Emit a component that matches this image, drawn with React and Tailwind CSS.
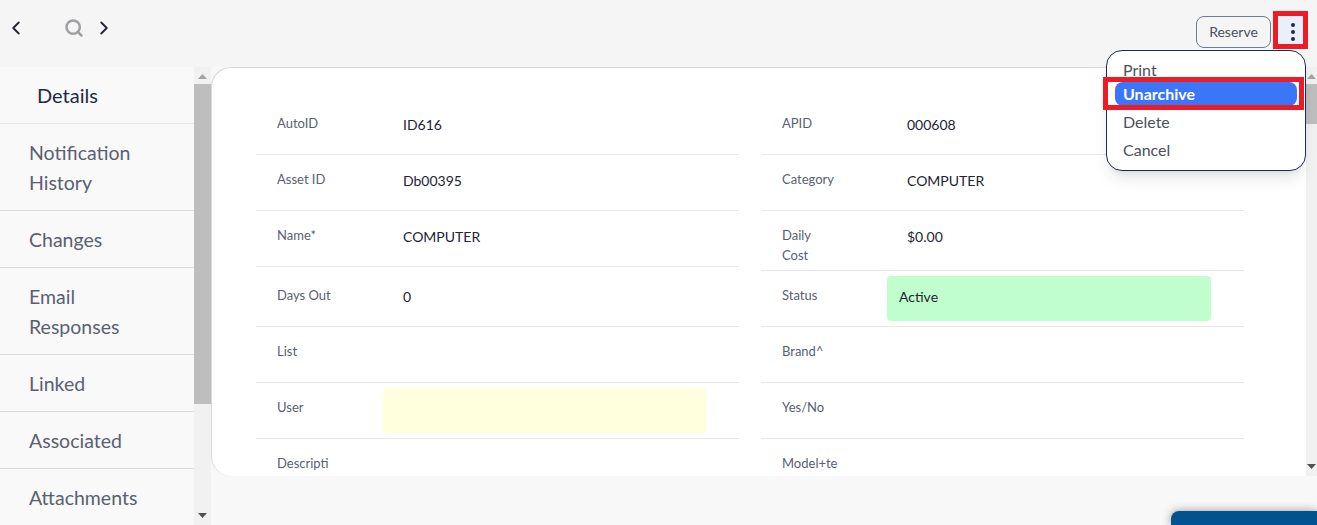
import { ChevronLeft, ChevronRight, Search } from "lucide-react";

const sideItems = [
  "Notification History",
  "Changes",
  "Email Responses",
  "Linked",
  "Associated",
  "Attachments",
];

const leftRows = [
  { label: "AutoID", value: "ID616" },
  { label: "Asset ID", value: "Db00395" },
  { label: "Name*", value: "COMPUTER" },
  { label: "Days Out", value: "0", low: true },
  { label: "List", value: "" },
  { label: "User", value: "", fill: "bg-[#ffffdd]" },
  { label: "Descripti", value: "" },
];

const rightRows = [
  { label: "APID", value: "000608" },
  { label: "Category", value: "COMPUTER" },
  { label: "Daily Cost", value: "$0.00", tall: true },
  { label: "Status", value: "Active", fill: "bg-[#c0ffcd]" },
  { label: "Brand^", value: "" },
  { label: "Yes/No", value: "" },
  { label: "Model+te", value: "" },
];

// Scrollbar arrow, pointing up or down
const Arrow = ({ down }) => (
  <svg width="9" height="5" viewBox="0 0 9 5" className="block">
    <path d={down ? "M0 0H9L4.5 5Z" : "M0 5H9L4.5 0Z"} fill={down ? "#505050" : "#a3a3a3"} />
  </svg>
);

const Scrollbar = ({ outer, thumb }) => (
  <div className={`flex flex-col items-center justify-between bg-[#f1f1f1] pt-[7px] pb-[7px] ${outer}`}>
    <Arrow />
    <div className={`mt-[5px] w-full bg-[#bebebe] ${thumb}`} />
    <div className="flex-1" />
    <Arrow down />
  </div>
);

const Row = ({ row, last, valueWidth, valuePad }) => (
  <div
    className={`flex ${row.tall || row.low ? "h-[60px]" : "h-[56px]"} ${last ? "" : "border-b border-[#e8e8e8]"}`}
  >
    <div
      className={`w-[126px] shrink-0 pl-[21px] text-[13px] leading-[20px] text-[#5a6072] ${row.low ? "pt-[18px]" : "pt-[14px]"}`}
    >
      {row.tall ? (
        <>
          Daily
          <br />
          Cost
        </>
      ) : (
        row.label
      )}
    </div>
    {row.fill ? (
      <div className={`my-[5px] ${valueWidth} rounded-[4px] ${row.fill} pl-[12px] pt-[11px] text-sm leading-[20px] text-[#1e2433]`}>
        {row.value}
      </div>
    ) : (
      <div className={`${valuePad} text-sm leading-[20px] text-[#1e2433] ${row.low ? "pt-[20px]" : "pt-[16px]"}`}>
        {row.value}
      </div>
    )}
  </div>
);

const menuItem = "pl-[16px] text-base leading-[28px] text-[#4b5060]";

export default function App() {
  return (
    <div className="relative h-[525px] w-[1317px] overflow-hidden bg-[#f8f8f8] font-['Lato',sans-serif]">
      {/* top bar */}
      <div className="flex h-[67px] items-start justify-between bg-[#f5f5f5]">
        <div className="flex items-center pl-[5px] pt-[17px]">
          <ChevronLeft size={22} strokeWidth={2} className="text-[#1f2430]" />
          <Search size={20} strokeWidth={3} className="ml-[37px] text-[#a0a0a4]" />
          <ChevronRight size={22} strokeWidth={2} className="ml-[9px] text-[#1f2430]" />
        </div>
        <div className="flex pt-[16px] pr-[12px]">
          <button className="h-[32px] w-[75px] rounded-lg border border-[#6f7b8f] text-sm text-[#4b5060]">
            Reserve
          </button>
          <div className="ml-[6px] flex h-[32px] w-[28px] flex-col items-center justify-center gap-[3px] bg-[#eaf0fb] pl-[4px]">
            <span className="size-[4px] rounded-full bg-[#1f2a44]" />
            <span className="size-[4px] rounded-full bg-[#1f2a44]" />
            <span className="size-[4px] rounded-full bg-[#1f2a44]" />
          </div>
        </div>
      </div>

      <div className="flex h-[458px] items-start">
        {/* side menu */}
        <div className="h-full w-[194px] shrink-0 overflow-hidden bg-[#f9f9f9]">
          <div className="h-[57px] border-b border-[#e6e6e6] pl-[37px] pt-[14px] text-xl leading-[28px] text-[#1e2a44]">
            Details
          </div>
          {sideItems.map((item) => (
            <div
              key={item}
              className="border-b border-[#dcdcdc] pl-[29px] pr-[50px] pt-[14px] pb-[12px] text-[19.5px] leading-[30px] text-[#5a6072]"
            >
              {item}
            </div>
          ))}
        </div>
        <Scrollbar outer="h-full w-[17px] shrink-0" thumb="h-[320px]" />

        {/* record card */}
        <div className="h-[409px] w-[1095px] shrink-0 overflow-hidden rounded-l-[20px] border-t border-l border-[#d8d8d8] bg-white">
          <div className="flex gap-[22px] pl-[44px] pt-[31px]">
            <div className="w-[483px]">
              {leftRows.map((row, i) => (
                <Row key={row.label} row={row} last={i === 6} valueWidth="ml-[1px] w-[323px]" valuePad="pl-[21px]" />
              ))}
            </div>
            <div className="w-[483px]">
              {rightRows.map((row, i) => (
                <Row key={row.label} row={row} last={i === 6} valueWidth="w-[324px]" valuePad="pl-[20px]" />
              ))}
            </div>
          </div>
        </div>
        <Scrollbar outer="h-[409px] w-[11px] shrink-0" thumb="h-[40px]" />
      </div>

      {/* actions menu */}
      <div className="absolute left-[1106px] top-[50px] h-[121px] w-[200px] rounded-2xl border border-[#1f2a52] bg-white pt-[6px] shadow-lg">
        <div className={`${menuItem} !leading-[25px]`}>Print</div>
        <div className="mx-[8px] h-[24px] rounded-lg bg-[#3a76f7] pl-[8px] text-base font-bold leading-[24px] text-white">
          Unarchive
        </div>
        <div className={`${menuItem} mt-[2px]`}>Delete</div>
        <div className={menuItem}>Cancel</div>
      </div>

      {/* red highlights */}
      <div className="pointer-events-none absolute left-[1273px] top-[11px] h-[38px] w-[35px] border-[5px] border-[#ed1c24]" />
      <div className="pointer-events-none absolute left-[1103px] top-[77px] h-[33px] w-[201px] border-[5px] border-[#ed1c24]" />

      {/* chat tab */}
      <div className="absolute left-[1171px] top-[511px] h-[14px] w-[146px] rounded-tl-lg bg-[#005290] shadow-[0_0_10px_rgba(0,0,0,0.4)]" />
    </div>
  );
}
